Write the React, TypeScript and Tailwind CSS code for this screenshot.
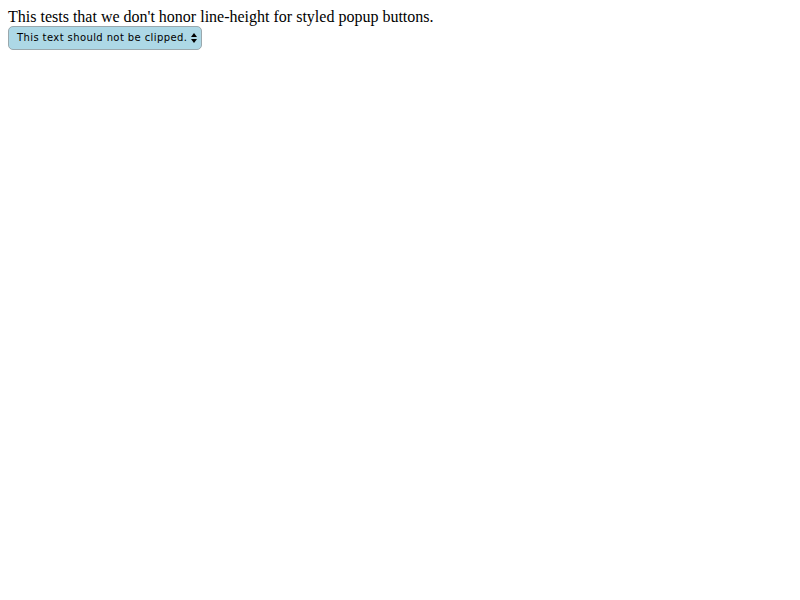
import React from "react";

export default function App() {
  return (
    <div className="p-2 bg-white min-h-[600px]">
      <div className="text-[16px] leading-[18px] text-black" style={{ fontFamily: '"Liberation Serif", serif' }}>
        This tests that we don't honor line-height for styled popup buttons.
      </div>
      <div className="flex">
        <div
          className="flex items-center h-[24px] w-[194px] rounded-[5px] border border-[#9aa8ad] bg-[#add8e6] pl-[8px] pr-[4px] text-black"
          style={{ fontFamily: '"DejaVu Sans", sans-serif' }}
        >
          <span className="text-[10px] leading-none tracking-[0.4px] flex-1 whitespace-nowrap">This text should not be clipped.</span>
          <svg width="6" height="10" viewBox="0 0 6 10" className="ml-[2px]">
            <polygon points="3,0 6,4 0,4" fill="#000" />
            <polygon points="0,6 6,6 3,10" fill="#000" />
          </svg>
        </div>
      </div>
    </div>
  );
}
